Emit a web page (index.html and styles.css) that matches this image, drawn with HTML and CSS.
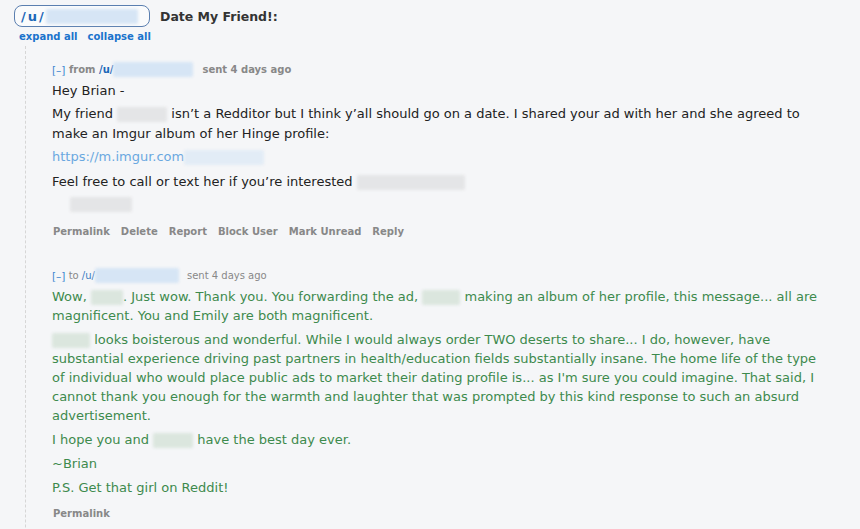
FILE: index.html
```html
<!DOCTYPE html>
<html>
<head>
<meta charset="utf-8">
<link rel="stylesheet" href="styles.css">
</head>
<body>
<div class="top">
  <div class="pill"><span class="pill-u">/u/</span><span class="blur blur-blue pill-blur"></span></div>
  <div class="title">Date My Friend!:</div>
</div>
<div class="expand"><a>expand all</a><a>collapse all</a></div>
<div class="thread">
  <div class="msg">
    <div class="tagline bold"><span class="toggle">[–]</span> from <span class="user">/u/</span><span class="blur blur-blue tag-blur"></span><span class="sent">sent 4 days ago</span></div>
    <div class="body">
      <p>Hey Brian -</p>
      <p>My friend <span class="blur blur-gray w50"></span> isn’t a Redditor but I think y’all should go on a date. I shared your ad with her and she agreed to make an Imgur album of her Hinge profile:</p>
      <p class="linkp"><a class="link">https://m.imgur.com</a><span class="blur blur-lblue w80"></span></p>
      <p>Feel free to call or text her if you’re interested <span class="blur blur-gray w108"></span></p>
      <p class="sig"><span class="blur blur-gray w62"></span></p>
    </div>
    <div class="actions"><a>Permalink</a><a>Delete</a><a>Report</a><a>Block User</a><a>Mark Unread</a><a>Reply</a></div>
  </div>
  <div class="msg msg2">
    <div class="tagline"><span class="toggle">[–]</span> to <span class="user2">/u/</span><span class="blur blur-blue tag-blur2"></span><span class="sent">sent 4 days ago</span></div>
    <div class="body green">
      <p>Wow, <span class="blur blur-green w32"></span>. Just wow. Thank you. You forwarding the ad, <span class="blur blur-green w38"></span> making an album of her profile, this message... all are magnificent. You and Emily are both magnificent.</p>
      <p><span class="blur blur-green w38"></span> looks boisterous and wonderful. While I would always order TWO deserts to share... I do, however, have substantial experience driving past partners in health/education fields substantially insane. The home life of the type of individual who would place public ads to market their dating profile is... as I'm sure you could imagine. That said, I cannot thank you enough for the warmth and laughter that was prompted by this kind response to such an absurd advertisement.</p>
      <p>I hope you and <span class="blur blur-green w40"></span> have the best day ever.</p>
      <p>~Brian</p>
      <p>P.S. Get that girl on Reddit!</p>
    </div>
    <div class="actions"><a>Permalink</a></div>
  </div>
</div>
</body>
</html>
```
FILE: styles.css
```css
html, body {
  margin: 0;
  padding: 0;
  background: #f5f6f8;
  font-family: "DejaVu Sans", Verdana, sans-serif;
  height: 529px;
  overflow: hidden;
}
.top {
  display: flex;
  align-items: center;
  padding: 5px 0 0 14px;
  gap: 10px;
}
.pill {
  box-sizing: border-box;
  width: 136px;
  height: 22px;
  border: 1.5px solid #5b7fb0;
  border-radius: 8px;
  display: flex;
  align-items: center;
  padding-left: 6px;
  background: #fafbfc;
}
.pill-u {
  font-weight: bold;
  font-size: 13px;
  color: #1c68b8;
  letter-spacing: 2px;
}
.pill-blur {
  width: 92px;
  height: 14px;
}
.title {
  font-weight: bold;
  font-size: 12.5px;
  color: #333;
}
.expand {
  margin: 4px 0 0 19px;
  display: flex;
  gap: 10px;
  font-size: 10px;
  font-weight: bold;
}
.expand a { color: #1a73cc; }
.thread {
  margin: 4px 0 0 25px;
  border-left: 1px dashed #d6d6d6;
  padding: 16px 30px 0 26px;
  height: 600px;
}
.tagline {
  font-size: 10px;
  color: #888;
  line-height: 14px;
  display: flex;
  align-items: center;
  white-space: pre;
}
.tagline.bold { font-weight: bold; }
.toggle { color: #3c86d0; font-weight: normal; font-size: 10.5px; }
.user { color: #1c68b8; }
.user2 { color: #3c7ec4; }
.tag-blur { width: 80px; height: 13px; margin-right: 9px; }
.tag-blur2 { width: 84px; height: 13px; margin-right: 8px; }
.body {
  font-size: 13px;
  color: #222;
  line-height: 20px;
  margin-top: 4px;
}
.body p { margin: 0 0 3px 0; }
.body p.linkp { margin-bottom: 5px; }
.body.green {
  color: #3d8a4d;
  line-height: 19px;
  margin-top: 4px;
}
.body.green p { margin-bottom: 5px; }
.link { color: #6aa8e0; }
.blur {
  display: inline-block;
  vertical-align: middle;
  height: 15px;
  filter: blur(1.5px);
  border-radius: 2px;
}
.blur-blue { background: #d6e5f5; }
.blur-lblue { background: #e2ecf6; }
.blur-gray { background: #e4e5e7; }
.blur-green { background: #dbe6de; }
.w32 { width: 32px; }
.w38 { width: 38px; }
.w40 { width: 40px; }
.w50 { width: 50px; }
.w62 { width: 62px; }
.w80 { width: 80px; }
.w108 { width: 108px; }
.sig { padding-left: 18px; line-height: 17px; }
.actions {
  display: flex;
  gap: 11px;
  font-size: 10px;
  font-weight: bold;
  color: #888;
  margin: 14px 0 0 1px;
}
.msg2 { margin-top: 31px; }
.msg2 .actions { margin-top: 11px; }
```
